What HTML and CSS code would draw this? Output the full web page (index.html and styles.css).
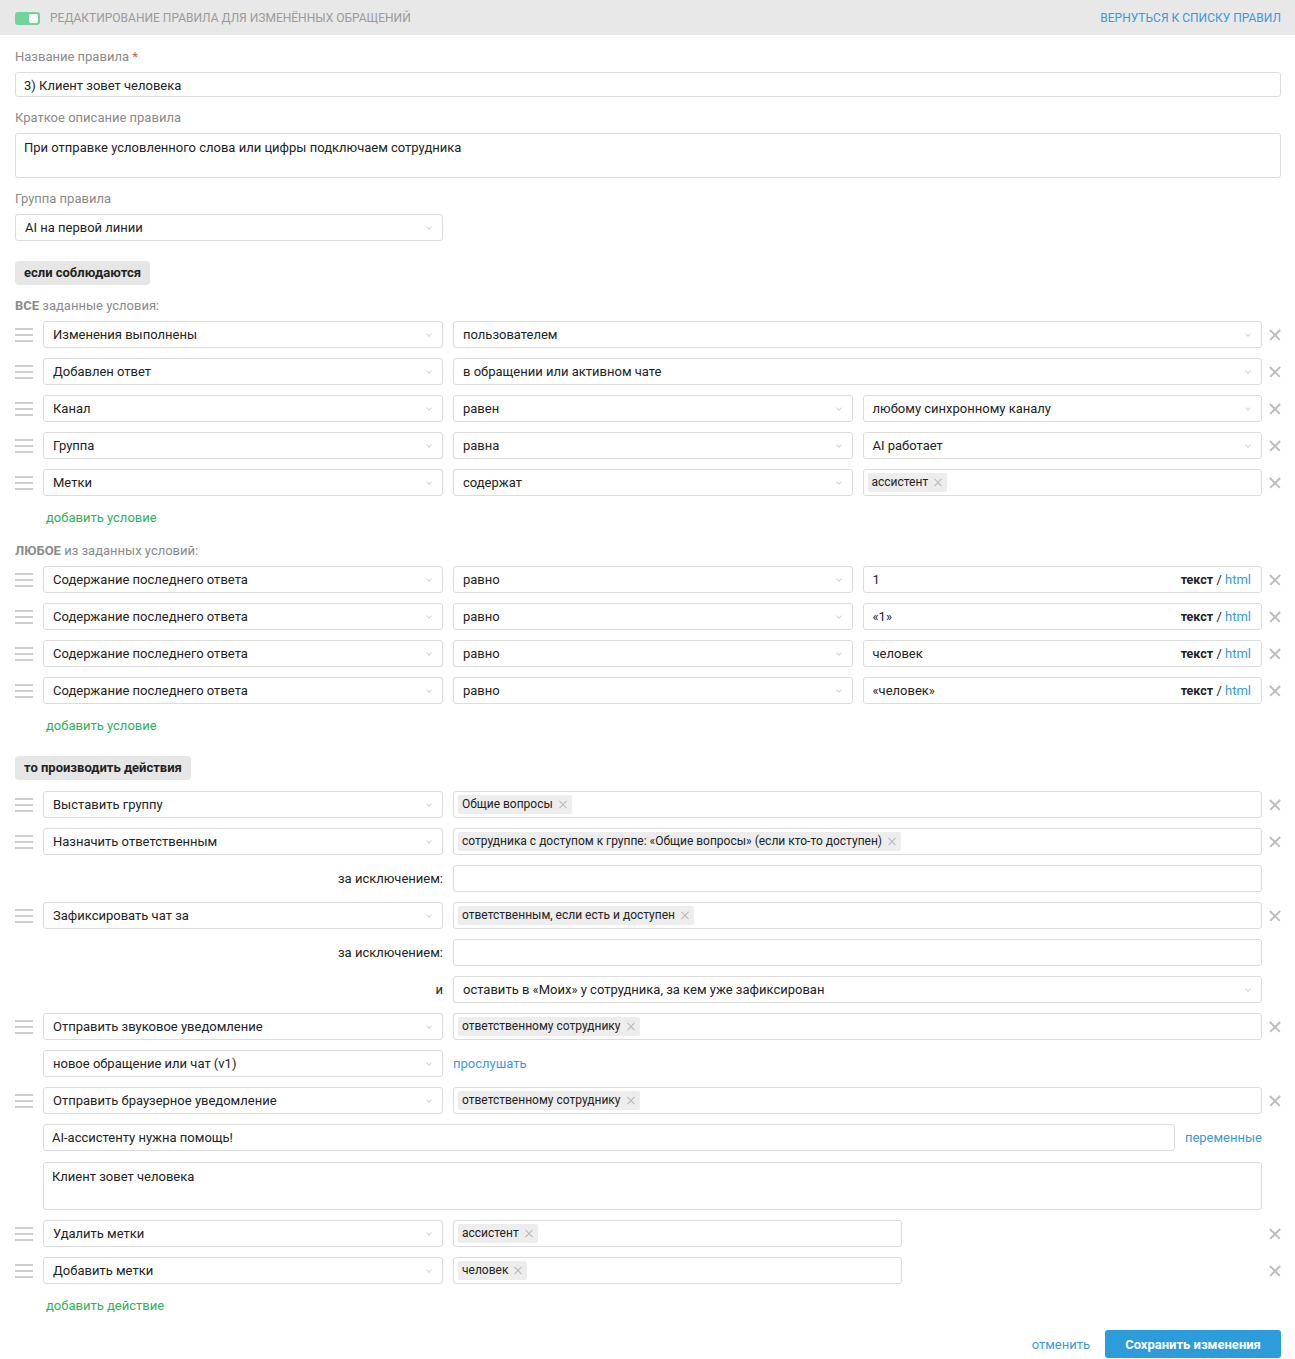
FILE: index.html
```html
<!DOCTYPE html>
<html lang="ru">
<head>
  <meta charset="UTF-8" />
  <title>Редактирование правила</title>
  <link rel="stylesheet" href="styles.css">
</head>
<body>

  <header class="topbar">
    <div class="topbar-left">
      <span class="toggle"><span class="toggle-knob"></span></span>
      <span class="topbar-title">Редактирование правила для изменённых обращений</span>
    </div>
    <a class="topbar-link" href="#">Вернуться к списку правил</a>
  </header>

  <main class="content">
    <label class="field-label">Название правила <span class="req">*</span></label>
    <div class="input wide">3) Клиент зовет человека</div>

    <label class="field-label">Краткое описание правила</label>
    <div class="input textarea">При отправке условленного слова или цифры подключаем сотрудника</div>

    <label class="field-label">Группа правила</label>
    <div class="select group-select">AI на первой линии<i class="chev"></i></div>

    <div class="section-btn">если соблюдаются</div>

    <div class="cond-title"><b>ВСЕ</b> заданные условия:</div>

    <div class="row">
      <span class="handle"></span>
      <div class="select main">Изменения выполнены<i class="chev"></i></div>
      <div class="rest"><div class="select">пользователем<i class="chev"></i></div></div>
      <span class="close"></span>
    </div>
    <div class="row">
      <span class="handle"></span>
      <div class="select main">Добавлен ответ<i class="chev"></i></div>
      <div class="rest"><div class="select">в обращении или активном чате<i class="chev"></i></div></div>
      <span class="close"></span>
    </div>
    <div class="row">
      <span class="handle"></span>
      <div class="select main">Канал<i class="chev"></i></div>
      <div class="rest">
        <div class="select">равен<i class="chev"></i></div>
        <div class="select">любому синхронному каналу<i class="chev"></i></div>
      </div>
      <span class="close"></span>
    </div>
    <div class="row">
      <span class="handle"></span>
      <div class="select main">Группа<i class="chev"></i></div>
      <div class="rest">
        <div class="select">равна<i class="chev"></i></div>
        <div class="select">AI работает<i class="chev"></i></div>
      </div>
      <span class="close"></span>
    </div>
    <div class="row">
      <span class="handle"></span>
      <div class="select main">Метки<i class="chev"></i></div>
      <div class="rest">
        <div class="select">содержат<i class="chev"></i></div>
        <div class="tags"><span class="tag">ассистент<i class="tag-x"></i></span></div>
      </div>
      <span class="close"></span>
    </div>
    <a class="add-link" href="#">добавить условие</a>

    <div class="cond-title any"><b>ЛЮБОЕ</b> из заданных условий:</div>

    <div class="row">
      <span class="handle"></span>
      <div class="select main">Содержание последнего ответа<i class="chev"></i></div>
      <div class="rest">
        <div class="select">равно<i class="chev"></i></div>
        <div class="input text-html">1<span class="mode"><b>текст</b> / <a href="#">html</a></span></div>
      </div>
      <span class="close"></span>
    </div>
    <div class="row">
      <span class="handle"></span>
      <div class="select main">Содержание последнего ответа<i class="chev"></i></div>
      <div class="rest">
        <div class="select">равно<i class="chev"></i></div>
        <div class="input text-html">«1»<span class="mode"><b>текст</b> / <a href="#">html</a></span></div>
      </div>
      <span class="close"></span>
    </div>
    <div class="row">
      <span class="handle"></span>
      <div class="select main">Содержание последнего ответа<i class="chev"></i></div>
      <div class="rest">
        <div class="select">равно<i class="chev"></i></div>
        <div class="input text-html">человек<span class="mode"><b>текст</b> / <a href="#">html</a></span></div>
      </div>
      <span class="close"></span>
    </div>
    <div class="row">
      <span class="handle"></span>
      <div class="select main">Содержание последнего ответа<i class="chev"></i></div>
      <div class="rest">
        <div class="select">равно<i class="chev"></i></div>
        <div class="input text-html">«человек»<span class="mode"><b>текст</b> / <a href="#">html</a></span></div>
      </div>
      <span class="close"></span>
    </div>
    <a class="add-link" href="#">добавить условие</a>

    <div class="section-btn actions">то производить действия</div>

    <div class="row">
      <span class="handle"></span>
      <div class="select main">Выставить группу<i class="chev"></i></div>
      <div class="rest"><div class="tags"><span class="tag">Общие вопросы<i class="tag-x"></i></span></div></div>
      <span class="close"></span>
    </div>
    <div class="row">
      <span class="handle"></span>
      <div class="select main">Назначить ответственным<i class="chev"></i></div>
      <div class="rest"><div class="tags"><span class="tag">сотрудника с доступом к группе: «Общие вопросы» (если кто-то доступен)<i class="tag-x"></i></span></div></div>
      <span class="close"></span>
    </div>
    <div class="row">
      <span class="handle blank"></span>
      <div class="main sub-label">за исключением:</div>
      <div class="rest"><div class="tags"></div></div>
      <span class="close blank"></span>
    </div>
    <div class="row">
      <span class="handle"></span>
      <div class="select main">Зафиксировать чат за<i class="chev"></i></div>
      <div class="rest"><div class="tags"><span class="tag">ответственным, если есть и доступен<i class="tag-x"></i></span></div></div>
      <span class="close"></span>
    </div>
    <div class="row">
      <span class="handle blank"></span>
      <div class="main sub-label">за исключением:</div>
      <div class="rest"><div class="tags"></div></div>
      <span class="close blank"></span>
    </div>
    <div class="row">
      <span class="handle blank"></span>
      <div class="main sub-label">и</div>
      <div class="rest"><div class="select">оставить в «Моих» у сотрудника, за кем уже зафиксирован<i class="chev"></i></div></div>
      <span class="close blank"></span>
    </div>
    <div class="row">
      <span class="handle"></span>
      <div class="select main">Отправить звуковое уведомление<i class="chev"></i></div>
      <div class="rest"><div class="tags"><span class="tag">ответственному сотруднику<i class="tag-x"></i></span></div></div>
      <span class="close"></span>
    </div>
    <div class="row">
      <span class="handle blank"></span>
      <div class="select main">новое обращение или чат (v1)<i class="chev"></i></div>
      <div class="rest"><a class="blue-link" href="#">прослушать</a></div>
      <span class="close blank"></span>
    </div>
    <div class="row">
      <span class="handle"></span>
      <div class="select main">Отправить браузерное уведомление<i class="chev"></i></div>
      <div class="rest"><div class="tags"><span class="tag">ответственному сотруднику<i class="tag-x"></i></span></div></div>
      <span class="close"></span>
    </div>
    <div class="row notify">
      <span class="handle blank"></span>
      <div class="notify-title">
        <div class="input">AI-ассистенту нужна помощь!</div>
        <a class="blue-link" href="#">переменные</a>
      </div>
      <span class="close blank"></span>
    </div>
    <div class="row tall">
      <span class="handle blank"></span>
      <div class="input notify-body">Клиент зовет человека</div>
      <span class="close blank"></span>
    </div>
    <div class="row">
      <span class="handle"></span>
      <div class="select main">Удалить метки<i class="chev"></i></div>
      <div class="rest"><div class="tags half"><span class="tag">ассистент<i class="tag-x"></i></span></div></div>
      <span class="close"></span>
    </div>
    <div class="row">
      <span class="handle"></span>
      <div class="select main">Добавить метки<i class="chev"></i></div>
      <div class="rest"><div class="tags half"><span class="tag">человек<i class="tag-x"></i></span></div></div>
      <span class="close"></span>
    </div>
    <a class="add-link" href="#">добавить действие</a>

    <footer class="form-actions">
      <a class="cancel" href="#">отменить</a>
      <button class="save">Сохранить изменения</button>
    </footer>
  </main>

</body>
</html>
```

FILE: styles.css
```css
body {
  margin: 0;
  font-family: Roboto, "Liberation Sans", sans-serif;
  font-size: 13px;
  color: #222;
  background: #fff;
}

a {
  text-decoration: none;
}

/* top bar */
.topbar {
  height: 35px;
  background: #e8e8e8;
  display: flex;
  align-items: center;
  justify-content: space-between;
  padding: 1px 14px 0 15px;
  box-sizing: border-box;
}

.topbar-left {
  display: flex;
  align-items: center;
}

.toggle {
  width: 25px;
  height: 13px;
  border-radius: 3px;
  background: #6fd39c;
  display: flex;
  justify-content: flex-end;
  align-items: center;
  padding: 0 2px;
  box-sizing: border-box;
  margin-right: 10px;
}

.toggle-knob {
  width: 9px;
  height: 9px;
  background: #fff;
  border-radius: 2px;
}

.topbar-title {
  text-transform: uppercase;
  color: #9a9a9a;
  font-size: 12px;
}

.topbar-link {
  text-transform: uppercase;
  color: #3a9ad9;
  font-size: 12px;
}

/* form */
.content {
  padding: 14px 14px 0 15px;
}

.field-label {
  display: block;
  color: #8a8a8a;
  line-height: 16px;
  margin-bottom: 7px;
}

.req {
  color: #e05656;
}

.input,
.select,
.tags {
  box-sizing: border-box;
  border: 1px solid #dcdcdc;
  border-radius: 3px;
  background: #fff;
  height: 27px;
  line-height: 25px;
  padding: 0 9px;
  white-space: nowrap;
  overflow: hidden;
}

.input.wide {
  height: 25px;
  line-height: 25px;
  padding-left: 8px;
  margin-bottom: 13px;
}

.input.textarea {
  height: 45px;
  line-height: 28px;
  padding-left: 8px;
  margin-bottom: 13px;
}

.select {
  position: relative;
  padding-right: 26px;
}

.chev {
  position: absolute;
  right: 11px;
  top: 10px;
  width: 3px;
  height: 3px;
  border-right: 1px solid #d4d4d4;
  border-bottom: 1px solid #d4d4d4;
  transform: rotate(45deg);
}

.group-select {
  width: 428px;
  margin-bottom: 20px;
}

.section-btn {
  display: inline-block;
  background: #e6e6e6;
  border-radius: 4px;
  font-weight: bold;
  font-size: 13px;
  line-height: 24px;
  padding: 0 9px;
  margin-bottom: 13px;
}

.section-btn.actions {
  margin-top: 22px;
  margin-bottom: 11px;
}

.cond-title {
  color: #8a8a8a;
  line-height: 16px;
  margin-bottom: 7px;
}

.cond-title.any {
  margin-top: 17px;
}

/* rows */
.row {
  display: flex;
  align-items: center;
  height: 27px;
  margin-bottom: 10px;
}

.row.notify {
  margin-bottom: 11px;
}

.row.tall {
  height: 48px;
}

.handle {
  flex: none;
  width: 18px;
  height: 14px;
  margin-right: 10px;
  background:
    linear-gradient(#cfcfcf, #cfcfcf) 0 0 / 100% 2px no-repeat,
    linear-gradient(#cfcfcf, #cfcfcf) 0 6px / 100% 2px no-repeat,
    linear-gradient(#cfcfcf, #cfcfcf) 0 12px / 100% 2px no-repeat;
}

.handle.blank {
  background: none;
}

.main {
  flex: none;
  width: 400px;
}

/* fields to the right of the main select share the width equally */
.rest {
  flex: 1;
  display: grid;
  grid-auto-flow: column;
  grid-auto-columns: minmax(0, 1fr);
  align-items: center;
  column-gap: 10px;
  margin-left: 10px;
  min-width: 0;
}

.rest > .tags.half {
  width: 449px;
}

.close {
  flex: none;
  width: 19px;
  height: 11px;
  position: relative;
}

.close::before,
.close::after {
  content: "";
  position: absolute;
  right: -1px;
  top: 5px;
  width: 14px;
  height: 1.5px;
  background: #bcbcbc;
  transform: rotate(45deg);
}

.close::after {
  transform: rotate(-45deg);
}

.close.blank::before,
.close.blank::after {
  display: none;
}

.tags {
  padding: 0 4px;
  display: flex;
  align-items: center;
}

.tag {
  display: inline-flex;
  align-items: center;
  background: #ededed;
  border-radius: 2px;
  font-size: 12px;
  line-height: 19px;
  padding: 0 5px 0 4px;
}

/* small cross for removing a tag */
.tag-x {
  position: relative;
  width: 8px;
  height: 8px;
  margin-left: 6px;
}

.tag-x::before,
.tag-x::after {
  content: "";
  position: absolute;
  left: -1px;
  top: 3.5px;
  width: 10px;
  height: 1px;
  background: #b8b8b8;
  transform: rotate(45deg);
}

.tag-x::after {
  transform: rotate(-45deg);
}

.text-html {
  display: flex;
  justify-content: space-between;
  padding-right: 10px;
}

.mode b {
  font-size: 12.5px;
}

.mode a,
.blue-link {
  color: #3a9ad9;
}

.add-link {
  display: block;
  color: #2eb15d;
  margin: 14px 0 0 31px;
  line-height: 16px;
}

.sub-label {
  text-align: right;
}

.notify-title {
  flex: 1;
  display: flex;
  align-items: center;
  gap: 10px;
}

.notify-title .input {
  flex: 1;
  padding-left: 8px;
}

.notify-body {
  flex: 1;
  height: 48px;
  line-height: 28px;
  padding-left: 8px;
}

/* bottom buttons */
.form-actions {
  display: flex;
  justify-content: flex-end;
  align-items: center;
  gap: 15px;
  margin-top: 16px;
  padding-bottom: 1px;
}

.cancel {
  color: #3a9ad9;
}

.save {
  width: 176px;
  height: 28px;
  border: none;
  border-radius: 3px;
  background: #2d9cdb;
  color: #fff;
  font-family: Roboto, "Liberation Sans", sans-serif;
  font-weight: bold;
  font-size: 13px;
}
```
